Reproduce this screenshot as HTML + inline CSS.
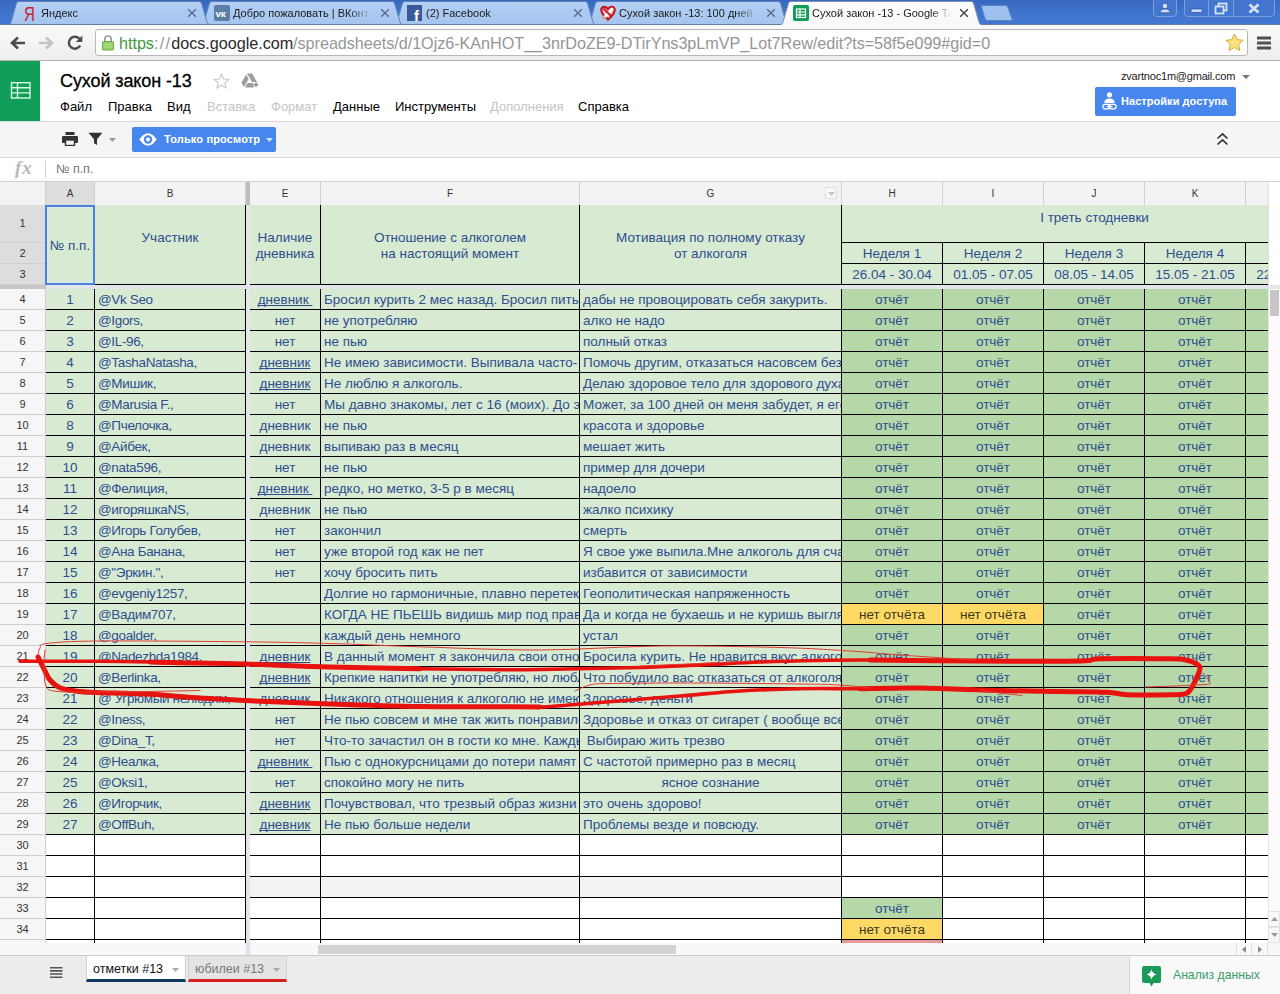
<!DOCTYPE html>
<html lang="ru">
<head>
<meta charset="utf-8">
<title>Сухой закон -13 - Google Таблицы</title>
<style>
*{box-sizing:border-box;margin:0;padding:0}
html,body{width:1280px;height:994px;overflow:hidden;background:#fff}
body{font-family:"Liberation Sans",sans-serif;position:relative;color:#000}
.abs{position:absolute}
/* ---------- browser chrome ---------- */
#frame{position:absolute;left:0;top:0;width:1280px;height:25px;background:linear-gradient(#3868bd,#4174cd 50%,#4378d2)}
.tab{position:absolute;top:1px;height:24px}
.tab svg{position:absolute;left:0;top:0}
.tab .tt{position:absolute;top:6px;left:40px;font-size:11px;color:#1a1a1a;white-space:nowrap;overflow:hidden}
.tab .x{position:absolute;top:4px;font-size:13px;color:#56627a;font-weight:bold}
#navbar{position:absolute;left:0;top:25px;width:1280px;height:36px;background:linear-gradient(#fafafa,#eeeeee);border-bottom:1px solid #b5b5b5}
#omni{position:absolute;left:95px;top:4px;width:1153px;height:27px;background:#fff;border:1px solid #b8b8b8;border-radius:3px}
#url{position:absolute;left:23px;top:4px;font-size:16.2px;letter-spacing:-0.04px;white-space:nowrap;color:#969696}
/* ---------- sheets header ---------- */
#logo{position:absolute;left:0;top:61px;width:40px;height:60px;background:#0f9d58}
#title{position:absolute;left:60px;top:71px;font-size:18px;color:#000;white-space:nowrap;letter-spacing:-0.1px;-webkit-text-stroke:0.3px #000}
#menu{position:absolute;left:60px;top:99px;font-size:13px;white-space:nowrap;color:#000}
#menu span{position:absolute;top:0}
#menu .dis{color:#c4c4c4}
#hdrline{position:absolute;left:0;top:121px;width:1280px;height:1px;background:#d9d9d9}
#toolbar{position:absolute;left:0;top:122px;width:1280px;height:36px;background:#f5f5f5;border-bottom:1px solid #d9d9d9}
#viewbtn{position:absolute;left:132px;top:4.5px;width:144px;height:25px;background:#4787ed;border-radius:2px;color:#fff;font-size:11px;font-weight:bold;letter-spacing:0.15px;line-height:25px}
#share{position:absolute;left:1095px;top:87px;width:141px;height:29px;background:#4787ed;border-radius:2px;color:#fff;font-size:11px;font-weight:bold;letter-spacing:0.05px;line-height:29px}
#email{position:absolute;left:1121px;top:70px;font-size:11px;letter-spacing:-0.2px;color:#222;white-space:nowrap}
#fbar{position:absolute;left:0;top:158px;width:1280px;height:24px;background:#fff;border-bottom:1px solid #d0d0d0}
/* ---------- grid ---------- */
#grid{position:absolute;left:0;top:182px;width:1268px;height:761px;background:#000;overflow:hidden}
#gridinner{position:absolute;left:0;top:-182px;width:1268px;height:1000px}
.ch{position:absolute;top:182px;height:23px;background:#f3f3f3;font-size:10px;text-align:center;line-height:24px;color:#333}
.ch.sel,.rh.sel{background:#dddddd}
.rh{position:absolute;left:0;width:45px;background:#f6f6f6;font-size:11px;text-align:center;color:#333}
.c{position:absolute;overflow:hidden;white-space:nowrap;font-size:13.5px;color:#2d4f8e;padding:0 3px;font-family:"Liberation Sans",sans-serif}
.lg{background:#d9ead3}
.dg{background:#b6d7a8}
.yl{background:#ffd966;color:#3a3a20}
.wh{background:#fff}
.gr{background:#f3f3f3}
.rd{background:#ea9999}
.ctr{text-align:center}
.cb{letter-spacing:-0.35px}
.c u{text-decoration:underline;text-decoration-skip-ink:none;text-underline-offset:1px}
.hd{position:absolute;background:#d9ead3;color:#2d4f8e;font-size:13.5px;text-align:center;white-space:nowrap;overflow:hidden}
/* ---------- bottom ---------- */
#hscroll{position:absolute;left:0;top:943px;width:1280px;height:12px;background:#f8f8f8}
#bottom{position:absolute;left:0;top:955px;width:1280px;height:39px;background:#ececec;border-top:1px solid #cbcbcb}
</style>
</head>
<body>
<!-- ================= Browser frame / tabs ================= -->
<div id="frame">
<svg width="0" height="0" style="position:absolute"><defs><linearGradient id="ti" x1="0" y1="0" x2="0" y2="1"><stop offset="0" stop-color="#b4d0f5"/><stop offset="1" stop-color="#a3c4ee"/></linearGradient><linearGradient id="ta" x1="0" y1="0" x2="0" y2="1"><stop offset="0" stop-color="#ffffff"/><stop offset="1" stop-color="#f7f7f7"/></linearGradient></defs></svg><div class="tab" style="left:587.0px;width:202px"><svg width="202" height="25" viewBox="0 0 202 25"><path d="M0 24 C1.5 24 2.5 22.5 3.2 20.5 L8.2 3 C8.8 1.2 9.6 0.5 11 0.5 L191 0.5 C192.4 0.5 193.2 1.2 193.8 3 L198.8 20.5 C199.5 22.5 200.5 24 202 24 Z" fill="url(#ti)"/><path d="M0 24 C1.5 24 2.5 22.5 3.2 20.5 L8.2 3 C8.8 1.2 9.6 0.5 11 0.5 L191 0.5 C192.4 0.5 193.2 1.2 193.8 3 L198.8 20.5 C199.5 22.5 200.5 24 202 24" fill="none" stroke="#5f82bd" stroke-width="1"/></svg><svg width="16" height="16" viewBox="0 0 16 16" style="left:13px;top:4px;overflow:visible"><path d="M8 14.500 C2.500 10 0.800 7 1.300 4.300 C2 1.300 6 1 8 4 C10 1 14 1.300 14.700 4.300 C15.200 7 13.500 10 8 14.500Z" fill="#eec0bd" stroke="#c7141d" stroke-width="2.200"/><path d="M12.800 3.200 L4.200 12.300" stroke="#fff" stroke-width="2.600" fill="none"/><path d="M3.600 3.600 L11.800 11.600" stroke="#c7141d" stroke-width="2" fill="none"/><path d="M4.600 11.800 L3 13.500" stroke="#e39a3a" stroke-width="2" fill="none"/></svg><span class="tt" style="left:32px;width:138px;-webkit-mask-image:linear-gradient(90deg,#000 85%,transparent);mask-image:linear-gradient(90deg,#000 85%,transparent)">Сухой закон -13: 100 дней</span><svg width="10" height="10" viewBox="0 0 10 10" style="left:179px;top:7px"><path d="M1.2 1.2L8.8 8.8M8.8 1.2L1.2 8.8" stroke="#5a6b8c" stroke-width="1.4" fill="none"/></svg></div><div class="tab" style="left:394.0px;width:202px"><svg width="202" height="25" viewBox="0 0 202 25"><path d="M0 24 C1.5 24 2.5 22.5 3.2 20.5 L8.2 3 C8.8 1.2 9.6 0.5 11 0.5 L191 0.5 C192.4 0.5 193.2 1.2 193.8 3 L198.8 20.5 C199.5 22.5 200.5 24 202 24 Z" fill="url(#ti)"/><path d="M0 24 C1.5 24 2.5 22.5 3.2 20.5 L8.2 3 C8.8 1.2 9.6 0.5 11 0.5 L191 0.5 C192.4 0.5 193.2 1.2 193.8 3 L198.8 20.5 C199.5 22.5 200.5 24 202 24" fill="none" stroke="#5f82bd" stroke-width="1"/></svg><svg width="16" height="16" viewBox="0 0 16 16" style="left:13px;top:4px;overflow:visible"><rect x="0" y="0" width="15" height="16" fill="#3b5998"/><text x="7" y="15.5" font-size="15" font-weight="bold" font-family="Liberation Sans, sans-serif" fill="#fff">f</text></svg><span class="tt" style="left:32px;width:138px;-webkit-mask-image:linear-gradient(90deg,#000 85%,transparent);mask-image:linear-gradient(90deg,#000 85%,transparent)">(2) Facebook</span><svg width="10" height="10" viewBox="0 0 10 10" style="left:179px;top:7px"><path d="M1.2 1.2L8.8 8.8M8.8 1.2L1.2 8.8" stroke="#5a6b8c" stroke-width="1.4" fill="none"/></svg></div><div class="tab" style="left:201.0px;width:202px"><svg width="202" height="25" viewBox="0 0 202 25"><path d="M0 24 C1.5 24 2.5 22.5 3.2 20.5 L8.2 3 C8.8 1.2 9.6 0.5 11 0.5 L191 0.5 C192.4 0.5 193.2 1.2 193.8 3 L198.8 20.5 C199.5 22.5 200.5 24 202 24 Z" fill="url(#ti)"/><path d="M0 24 C1.5 24 2.5 22.5 3.2 20.5 L8.2 3 C8.8 1.2 9.6 0.5 11 0.5 L191 0.5 C192.4 0.5 193.2 1.2 193.8 3 L198.8 20.5 C199.5 22.5 200.5 24 202 24" fill="none" stroke="#5f82bd" stroke-width="1"/></svg><svg width="16" height="16" viewBox="0 0 16 16" style="left:13px;top:4px;overflow:visible"><rect x="0" y="0" width="16" height="16" rx="2" fill="#5b7fa6"/><text x="1.5" y="11.800" font-size="9.800" font-weight="bold" font-family="Liberation Sans, sans-serif" fill="#fff" letter-spacing="-0.300">vк</text></svg><span class="tt" style="left:32px;width:138px;-webkit-mask-image:linear-gradient(90deg,#000 85%,transparent);mask-image:linear-gradient(90deg,#000 85%,transparent)">Добро пожаловать | ВКонт</span><svg width="10" height="10" viewBox="0 0 10 10" style="left:179px;top:7px"><path d="M1.2 1.2L8.8 8.8M8.8 1.2L1.2 8.8" stroke="#5a6b8c" stroke-width="1.4" fill="none"/></svg></div><div class="tab" style="left:8.0px;width:202px"><svg width="202" height="25" viewBox="0 0 202 25"><path d="M0 24 C1.5 24 2.5 22.5 3.2 20.5 L8.2 3 C8.8 1.2 9.6 0.5 11 0.5 L191 0.5 C192.4 0.5 193.2 1.2 193.8 3 L198.8 20.5 C199.5 22.5 200.5 24 202 24 Z" fill="url(#ti)"/><path d="M0 24 C1.5 24 2.5 22.5 3.2 20.5 L8.2 3 C8.8 1.2 9.6 0.5 11 0.5 L191 0.5 C192.4 0.5 193.2 1.2 193.8 3 L198.8 20.5 C199.5 22.5 200.5 24 202 24" fill="none" stroke="#5f82bd" stroke-width="1"/></svg><svg width="16" height="16" viewBox="0 0 16 16" style="left:16px;top:4px;overflow:visible"><text x="0" y="16" font-size="21" font-family="Liberation Sans, sans-serif" fill="#cc2229" transform="scale(0.72,1)">Я</text></svg><span class="tt" style="left:33px;width:138px;-webkit-mask-image:linear-gradient(90deg,#000 85%,transparent);mask-image:linear-gradient(90deg,#000 85%,transparent)">Яндекс</span><svg width="10" height="10" viewBox="0 0 10 10" style="left:179px;top:7px"><path d="M1.2 1.2L8.8 8.8M8.8 1.2L1.2 8.8" stroke="#5a6b8c" stroke-width="1.4" fill="none"/></svg></div><div class="abs" style="left:0;top:24px;width:1280px;height:1px;background:#637ba6"></div><div class="tab" style="left:780.0px;width:202px"><svg width="202" height="25" viewBox="0 0 202 25"><path d="M0 24 C1.5 24 2.5 22.5 3.2 20.5 L8.2 3 C8.8 1.2 9.6 0.5 11 0.5 L191 0.5 C192.4 0.5 193.2 1.2 193.8 3 L198.8 20.5 C199.5 22.5 200.5 24 202 24 Z" fill="url(#ta)"/><path d="M0 24 C1.5 24 2.5 22.5 3.2 20.5 L8.2 3 C8.8 1.2 9.6 0.5 11 0.5 L191 0.5 C192.4 0.5 193.2 1.2 193.8 3 L198.8 20.5 C199.5 22.5 200.5 24 202 24" fill="none" stroke="#7d8fae" stroke-width="1"/></svg><svg width="16" height="16" viewBox="0 0 16 16" style="left:13px;top:4px;overflow:visible"><rect x="0" y="0" width="16" height="16" rx="2" fill="#0f9d58"/><g fill="none" stroke="#fff" stroke-width="1.2"><rect x="3.5" y="4" width="9" height="8.5"/><path d="M3.5 7h9M3.5 9.8h9M7 4v8.5"/></g></svg><span class="tt" style="left:32px;width:140px;-webkit-mask-image:linear-gradient(90deg,#000 85%,transparent);mask-image:linear-gradient(90deg,#000 85%,transparent)">Сухой закон -13 - Google Та</span><svg width="10" height="10" viewBox="0 0 10 10" style="left:179px;top:7px"><path d="M1.2 1.2L8.8 8.8M8.8 1.2L1.2 8.8" stroke="#444" stroke-width="1.4" fill="none"/></svg></div><svg class="abs" style="left:979px;top:5px" width="36" height="16" viewBox="0 0 36 16"><path d="M2 0.5 L26 0.5 C28 0.5 28.6 1.5 29.2 3 L33.5 15.5 L9 15.5 C7 15.5 6.4 14.5 5.8 13 Z" fill="#9dc0ee" stroke="#5f82bd" stroke-width="1"/></svg><svg class="abs" style="left:1150px;top:0" width="130" height="19" viewBox="0 0 130 19"><path d="M3.500 0 V13 Q3.500 16.500 7 16.500 H23 Q26.500 16.500 26.500 13 V0" fill="#4376cf" stroke="#7c9fdc"/><path d="M34.500 0 V13 Q34.500 16.500 38 16.500 H121 Q124.500 16.500 124.500 13 V0" fill="#4376cf" stroke="#7c9fdc"/><path d="M58.500 0V16.500M83.500 0V16.500" stroke="#7c9fdc"/><circle cx="15" cy="6" r="2.800" fill="#d4e2fb" stroke="#2f55a0" stroke-width="0.800"/><path d="M10 12.800 Q10 9 15 9 Q20 9 20 12.800Z" fill="#d4e2fb" stroke="#2f55a0" stroke-width="0.800"/><rect x="41" y="9" width="11" height="3.400" rx="1" fill="#d4e2fb" stroke="#2f55a0" stroke-width="0.800"/><rect x="68.500" y="3.500" width="8" height="7" fill="none" stroke="#d4e2fb" stroke-width="1.800"/><rect x="65.500" y="6.500" width="8" height="7" fill="#4376cf" stroke="#d4e2fb" stroke-width="1.800"/><path d="M99.500 4.500 L108.500 12.500 M108.500 4.500 L99.500 12.500" stroke="#d4e2fb" stroke-width="2.800"/></svg>
</div>
<div id="navbar">
<svg class="abs" style="left:9px;top:10px" width="18" height="16" viewBox="0 0 18 16"><path d="M16 8H4M9 2.500L3 8l6 5.500" fill="none" stroke="#4d4d4d" stroke-width="2.600"/></svg><svg class="abs" style="left:37px;top:10px" width="18" height="16" viewBox="0 0 18 16"><path d="M2 8h12M9 2.500L15 8l-6 5.500" fill="none" stroke="#c3c3c3" stroke-width="2.600"/></svg><svg class="abs" style="left:66px;top:9px" width="18" height="18" viewBox="0 0 18 18"><path d="M14.200 11.500A6 6 0 1 1 13.600 5" fill="none" stroke="#4d4d4d" stroke-width="2.500"/><path d="M16.300 1.500v6.500h-6.500z" fill="#4d4d4d"/></svg><div id="omni"><svg class="abs" style="left:6px;top:4px" width="12" height="17" viewBox="0 0 12 17"><path d="M2.800 8V5.200a3.200 3.200 0 0 1 6.400 0V8" fill="none" stroke="#9a9a9a" stroke-width="1.600"/><rect x="0.500" y="7.500" width="11" height="8.500" rx="1" fill="#93cf63" stroke="#6aa843"/><path d="M1.500 10.300h9M1.500 12.800h9" stroke="#b6e394" stroke-width="1"/></svg><div id="url"><span style="color:#3c9a3c">https</span><span style="letter-spacing:1.3px">://</span><span style="color:#2a2a2a">docs.google.com</span>/spreadsheets/d/1Ojz6-KAnHOT__3nrDoZE9-DTirYns3pLmVP_Lot7Rew/edit?ts=58f5e099#gid=0</div><svg class="abs" style="left:1129px;top:3px" width="19" height="19" viewBox="0 0 19 19"><path d="M9.500 1l2.600 5.600 6 .700-4.500 4.200 1.200 6-5.300-3-5.300 3 1.200-6L.900 7.300l6-.700z" fill="#fbe27f" stroke="#d4ab35" stroke-width="1"/></svg></div><svg class="abs" style="left:1257px;top:11px" width="14" height="14" viewBox="0 0 14 14"><path d="M0 2h13.500M0 7h13.500M0 12h13.500" stroke="#505050" stroke-width="3" stroke-linecap="round"/></svg>
</div>

<!-- ================= Sheets header ================= -->
<div id="logo">
<svg width="40" height="60" viewBox="0 0 40 60"><g fill="none" stroke="#d9f8e5" stroke-width="1.400"><rect x="11.500" y="21.700" width="18.500" height="15.300"/><path d="M11.500 26.800h18.500M11.500 31.900h18.500M17.500 21.700v15.300"/></g></svg>
</div>
<div id="title">Сухой закон -13</div>
<svg class="abs" style="left:213px;top:73px" width="17" height="16" viewBox="0 0 17 16"><path d="M8.500 1.300l2.100 4.700 5.100.500-3.800 3.400 1.100 5-4.500-2.600-4.500 2.600 1.100-5L1.300 6.500l5.100-.500z" fill="none" stroke="#c9c9c9" stroke-width="1.200"/></svg><svg class="abs" style="left:241px;top:73px" width="19" height="15" viewBox="0 0 19 15"><path d="M6 0.500h5l5 8.500h-5zM5.200 1.500L0.500 9.500l2.500 4.500 4.700-8zM4 14.500l2.500-4.500h6.500v4.500z" fill="#9e9e9e"/><path d="M15 9v5.500M12.300 11.800h5.500" stroke="#fff" stroke-width="3"/><path d="M15 9.500v4.600M12.700 11.800h4.600" stroke="#8a8a8a" stroke-width="1.500"/></svg><svg class="abs" style="left:1242px;top:75px" width="8" height="4" viewBox="0 0 8 4"><path d="M0 0h8L4 4z" fill="#777"/></svg>
<div id="menu">
<span style="left:0">Файл</span><span style="left:48px">Правка</span><span style="left:107px">Вид</span><span class="dis" style="left:147px">Вставка</span><span class="dis" style="left:211px">Формат</span><span style="left:273px">Данные</span><span style="left:335px">Инструменты</span><span class="dis" style="left:430px">Дополнения</span><span style="left:518px">Справка</span>
</div>
<div id="email">zvartnoc1m@gmail.com</div>
<div id="share"><svg class="abs" style="left:7px;top:5px" width="15" height="18" viewBox="0 0 15 18"><circle cx="7.500" cy="2.800" r="2.600" fill="#fff"/><path d="M2.300 11Q2.300 6.500 7.500 6.500Q12.700 6.500 12.700 11Z" fill="#fff"/><rect x="0.800" y="12.300" width="7.600" height="4.600" rx="2.300" fill="#4787ed" stroke="#fff" stroke-width="1.200"/><rect x="6.600" y="12.300" width="7.600" height="4.600" rx="2.300" fill="none" stroke="#fff" stroke-width="1.200"/><path d="M4.500 14.600h6" stroke="#fff" stroke-width="1.200"/></svg><span style="position:absolute;left:26px;top:0">Настройки доступа</span></div>
<div id="hdrline"></div>
<div id="toolbar">
<svg class="abs" style="left:62px;top:10px" width="16" height="14" viewBox="0 0 16 14"><rect x="3.500" y="0" width="9" height="3" fill="#333"/><rect x="0" y="4" width="16" height="7" rx="1" fill="#333"/><rect x="3.500" y="8" width="9" height="5.500" fill="#f5f5f5" stroke="#333" stroke-width="1.400"/></svg><svg class="abs" style="left:88px;top:10px" width="15" height="14" viewBox="0 0 15 14"><path d="M0.500 0.800h14L9 7.300V13L6 11.300V7.300z" fill="#333"/></svg><svg class="abs" style="left:109px;top:16px" width="7" height="4" viewBox="0 0 7 4"><path d="M0 0h7L3.500 4z" fill="#9a9a9a"/></svg><div id="viewbtn"><svg class="abs" style="left:7px;top:4px" width="18" height="17" viewBox="0 0 18 17"><path d="M0.300 8.500Q9 -4 17.700 8.500Q9 21 0.300 8.500Z" fill="#fff"/><circle cx="9" cy="8.500" r="4.200" fill="#4787ed"/><circle cx="9" cy="8.500" r="2" fill="#fff"/></svg><span style="position:absolute;left:32px;top:0">Только просмотр</span><svg class="abs" style="left:134px;top:11px" width="7" height="4" viewBox="0 0 7 4"><path d="M0 0h7L3.500 4z" fill="#cfe0fb"/></svg></div><svg class="abs" style="left:1216px;top:10px" width="13" height="14" viewBox="0 0 13 14"><path d="M1.500 6.500L6.500 1.800L11.500 6.500M1.500 12.500L6.500 7.800L11.500 12.500" fill="none" stroke="#333" stroke-width="1.700"/></svg>
</div>
<div id="fbar">
<span style="position:absolute;left:15px;top:-1px;font-family:'Liberation Serif',serif;font-style:italic;font-weight:bold;font-size:19px;letter-spacing:1px;color:#b8b8b8">fx</span>
<div style="position:absolute;left:45px;top:3px;width:1px;height:17px;background:#d0d0d0"></div>
<span style="position:absolute;left:56px;top:4px;font-size:12.5px;color:#777">№ п.п.</span>
</div>

<!-- ================= Grid ================= -->
<div id="grid"><div id="gridinner">
<div class="abs" style="left:0;top:182px;width:1268px;height:23px;background:#cfcfcf"></div>
<div class="abs" style="left:0;top:182px;width:45px;height:23px;background:#f3f3f3"></div>
<div class="ch sel" style="left:46px;width:48px">A</div>
<div class="ch" style="left:95px;width:150px">B</div>
<div class="ch" style="left:250px;width:70px">E</div>
<div class="ch" style="left:321px;width:258px">F</div>
<div class="ch" style="left:580px;width:261px">G</div>
<div class="ch" style="left:842px;width:100px">H</div>
<div class="ch" style="left:943px;width:100px">I</div>
<div class="ch" style="left:1044px;width:100px">J</div>
<div class="ch" style="left:1145px;width:100px">K</div>
<div class="ch" style="left:1246px;width:22px"></div>
<div class="abs" style="left:0;top:205px;width:46px;height:760px;background:#cfcfcf"></div>
<div class="rh sel" style="top:205px;height:37px;line-height:37px">1</div>
<div class="rh sel" style="top:243px;height:20px;line-height:20px">2</div>
<div class="rh sel" style="top:264px;height:20px;line-height:20px">3</div>
<div class="rh" style="top:289px;height:20px;line-height:20px">4</div>
<div class="rh" style="top:310px;height:20px;line-height:20px">5</div>
<div class="rh" style="top:331px;height:20px;line-height:20px">6</div>
<div class="rh" style="top:352px;height:20px;line-height:20px">7</div>
<div class="rh" style="top:373px;height:20px;line-height:20px">8</div>
<div class="rh" style="top:394px;height:20px;line-height:20px">9</div>
<div class="rh" style="top:415px;height:20px;line-height:20px">10</div>
<div class="rh" style="top:436px;height:20px;line-height:20px">11</div>
<div class="rh" style="top:457px;height:20px;line-height:20px">12</div>
<div class="rh" style="top:478px;height:20px;line-height:20px">13</div>
<div class="rh" style="top:499px;height:20px;line-height:20px">14</div>
<div class="rh" style="top:520px;height:20px;line-height:20px">15</div>
<div class="rh" style="top:541px;height:20px;line-height:20px">16</div>
<div class="rh" style="top:562px;height:20px;line-height:20px">17</div>
<div class="rh" style="top:583px;height:20px;line-height:20px">18</div>
<div class="rh" style="top:604px;height:20px;line-height:20px">19</div>
<div class="rh" style="top:625px;height:20px;line-height:20px">20</div>
<div class="rh" style="top:646px;height:20px;line-height:20px">21</div>
<div class="rh" style="top:667px;height:20px;line-height:20px">22</div>
<div class="rh" style="top:688px;height:20px;line-height:20px">23</div>
<div class="rh" style="top:709px;height:20px;line-height:20px">24</div>
<div class="rh" style="top:730px;height:20px;line-height:20px">25</div>
<div class="rh" style="top:751px;height:20px;line-height:20px">26</div>
<div class="rh" style="top:772px;height:20px;line-height:20px">27</div>
<div class="rh" style="top:793px;height:20px;line-height:20px">28</div>
<div class="rh" style="top:814px;height:20px;line-height:20px">29</div>
<div class="rh" style="top:835px;height:20px;line-height:20px">30</div>
<div class="rh" style="top:856px;height:20px;line-height:20px">31</div>
<div class="rh" style="top:877px;height:20px;line-height:20px">32</div>
<div class="rh" style="top:898px;height:20px;line-height:20px">33</div>
<div class="rh" style="top:919px;height:20px;line-height:20px">34</div>
<div class="rh" style="top:940px;height:20px;line-height:20px">35</div>
<div class="hd" style="left:46px;top:205px;width:48px;height:79px;display:flex;align-items:center;justify-content:center;line-height:16px;padding-top:2px;"><span>№ п.п.</span></div><div class="hd" style="left:95px;top:205px;width:150px;height:79px;display:flex;align-items:center;justify-content:center;line-height:16px;padding-top:2px;"><span>Участник<br>&nbsp;</span></div><div class="hd" style="left:250px;top:205px;width:70px;height:79px;display:flex;align-items:center;justify-content:center;line-height:16px;padding-top:2px;"><span>Наличие<br>дневника</span></div><div class="hd" style="left:321px;top:205px;width:258px;height:79px;display:flex;align-items:center;justify-content:center;line-height:16px;padding-top:2px;"><span>Отношение с алкоголем<br>на настоящий момент</span></div><div class="hd" style="left:580px;top:205px;width:261px;height:79px;display:flex;align-items:center;justify-content:center;line-height:16px;padding-top:2px;"><span>Мотивация по полному отказу<br>от алкоголя</span></div><div class="hd" style="left:842px;top:205px;width:505px;height:37px;line-height:37px;"><span style="position:relative;top:-6px">I треть стодневки</span></div><div class="hd" style="left:842px;top:243px;width:100px;height:20px;line-height:22px;">Неделя 1</div><div class="hd" style="left:943px;top:243px;width:100px;height:20px;line-height:22px;">Неделя 2</div><div class="hd" style="left:1044px;top:243px;width:100px;height:20px;line-height:22px;">Неделя 3</div><div class="hd" style="left:1145px;top:243px;width:100px;height:20px;line-height:22px;">Неделя 4</div><div class="hd" style="left:1246px;top:243px;width:100px;height:20px;line-height:20px;"></div><div class="hd" style="left:842px;top:264px;width:100px;height:20px;line-height:22px;">26.04 - 30.04</div><div class="hd" style="left:943px;top:264px;width:100px;height:20px;line-height:22px;">01.05 - 07.05</div><div class="hd" style="left:1044px;top:264px;width:100px;height:20px;line-height:22px;">08.05 - 14.05</div><div class="hd" style="left:1145px;top:264px;width:100px;height:20px;line-height:22px;">15.05 - 21.05</div><div class="hd" style="left:1246px;top:264px;width:100px;height:20px;line-height:22px;">22.05 - 28.05</div><div class="abs" style="left:45px;top:205px;width:50px;height:80px;border:2px solid #4a82d8;box-shadow:inset 0 0 0 1px rgba(215,232,255,.75)"></div><div class="abs" style="left:825px;top:187px;width:12px;height:12px;border:1px solid #e0e0e0;background:#f8f8f8"></div><svg class="abs" style="left:828px;top:192px" width="7" height="4" viewBox="0 0 7 4"><path d="M0 0h7L3.500 4z" fill="#c4c4c4"/></svg>
<div class="c lg ctr" style="left:46px;top:289px;width:48px;height:20px;line-height:22px;">1</div>
<div class="c lg cb" style="left:95px;top:289px;width:150px;height:20px;line-height:22px;">@Vk Seo</div>
<div class="c lg ctr" style="left:250px;top:289px;width:70px;height:20px;line-height:22px;"><u>дневник&nbsp;</u></div>
<div class="c lg" style="left:321px;top:289px;width:258px;height:20px;line-height:22px;">Бросил курить 2 мес назад. Бросил пить</div>
<div class="c lg" style="left:580px;top:289px;width:261px;height:20px;line-height:22px;">дабы не провоцировать себя закурить.</div>
<div class="c dg ctr" style="left:842px;top:289px;width:100px;height:20px;line-height:22px;">отчёт</div>
<div class="c dg ctr" style="left:943px;top:289px;width:100px;height:20px;line-height:22px;">отчёт</div>
<div class="c dg ctr" style="left:1044px;top:289px;width:100px;height:20px;line-height:22px;">отчёт</div>
<div class="c dg ctr" style="left:1145px;top:289px;width:100px;height:20px;line-height:22px;">отчёт</div>
<div class="c dg" style="left:1246px;top:289px;width:22px;height:20px;line-height:22px;"></div>
<div class="c lg ctr" style="left:46px;top:310px;width:48px;height:20px;line-height:22px;">2</div>
<div class="c lg cb" style="left:95px;top:310px;width:150px;height:20px;line-height:22px;">@Igors,</div>
<div class="c lg ctr" style="left:250px;top:310px;width:70px;height:20px;line-height:22px;">нет</div>
<div class="c lg" style="left:321px;top:310px;width:258px;height:20px;line-height:22px;">не употребляю</div>
<div class="c lg" style="left:580px;top:310px;width:261px;height:20px;line-height:22px;">алко не надо</div>
<div class="c dg ctr" style="left:842px;top:310px;width:100px;height:20px;line-height:22px;">отчёт</div>
<div class="c dg ctr" style="left:943px;top:310px;width:100px;height:20px;line-height:22px;">отчёт</div>
<div class="c dg ctr" style="left:1044px;top:310px;width:100px;height:20px;line-height:22px;">отчёт</div>
<div class="c dg ctr" style="left:1145px;top:310px;width:100px;height:20px;line-height:22px;">отчёт</div>
<div class="c dg" style="left:1246px;top:310px;width:22px;height:20px;line-height:22px;"></div>
<div class="c lg ctr" style="left:46px;top:331px;width:48px;height:20px;line-height:22px;">3</div>
<div class="c lg cb" style="left:95px;top:331px;width:150px;height:20px;line-height:22px;">@IL-96,</div>
<div class="c lg ctr" style="left:250px;top:331px;width:70px;height:20px;line-height:22px;">нет</div>
<div class="c lg" style="left:321px;top:331px;width:258px;height:20px;line-height:22px;">не пью</div>
<div class="c lg" style="left:580px;top:331px;width:261px;height:20px;line-height:22px;">полный отказ</div>
<div class="c dg ctr" style="left:842px;top:331px;width:100px;height:20px;line-height:22px;">отчёт</div>
<div class="c dg ctr" style="left:943px;top:331px;width:100px;height:20px;line-height:22px;">отчёт</div>
<div class="c dg ctr" style="left:1044px;top:331px;width:100px;height:20px;line-height:22px;">отчёт</div>
<div class="c dg ctr" style="left:1145px;top:331px;width:100px;height:20px;line-height:22px;">отчёт</div>
<div class="c dg" style="left:1246px;top:331px;width:22px;height:20px;line-height:22px;"></div>
<div class="c lg ctr" style="left:46px;top:352px;width:48px;height:20px;line-height:22px;">4</div>
<div class="c lg cb" style="left:95px;top:352px;width:150px;height:20px;line-height:22px;">@TashaNatasha,</div>
<div class="c lg ctr" style="left:250px;top:352px;width:70px;height:20px;line-height:22px;"><u>дневник</u></div>
<div class="c lg" style="left:321px;top:352px;width:258px;height:20px;line-height:22px;">Не имею зависимости. Выпивала часто-</div>
<div class="c lg" style="left:580px;top:352px;width:261px;height:20px;line-height:22px;">Помочь другим, отказаться насовсем без</div>
<div class="c dg ctr" style="left:842px;top:352px;width:100px;height:20px;line-height:22px;">отчёт</div>
<div class="c dg ctr" style="left:943px;top:352px;width:100px;height:20px;line-height:22px;">отчёт</div>
<div class="c dg ctr" style="left:1044px;top:352px;width:100px;height:20px;line-height:22px;">отчёт</div>
<div class="c dg ctr" style="left:1145px;top:352px;width:100px;height:20px;line-height:22px;">отчёт</div>
<div class="c dg" style="left:1246px;top:352px;width:22px;height:20px;line-height:22px;"></div>
<div class="c lg ctr" style="left:46px;top:373px;width:48px;height:20px;line-height:22px;">5</div>
<div class="c lg cb" style="left:95px;top:373px;width:150px;height:20px;line-height:22px;">@Мишик,</div>
<div class="c lg ctr" style="left:250px;top:373px;width:70px;height:20px;line-height:22px;"><u>дневник</u></div>
<div class="c lg" style="left:321px;top:373px;width:258px;height:20px;line-height:22px;">Не люблю я алкоголь.</div>
<div class="c lg" style="left:580px;top:373px;width:261px;height:20px;line-height:22px;">Делаю здоровое тело для здорового духа</div>
<div class="c dg ctr" style="left:842px;top:373px;width:100px;height:20px;line-height:22px;">отчёт</div>
<div class="c dg ctr" style="left:943px;top:373px;width:100px;height:20px;line-height:22px;">отчёт</div>
<div class="c dg ctr" style="left:1044px;top:373px;width:100px;height:20px;line-height:22px;">отчёт</div>
<div class="c dg ctr" style="left:1145px;top:373px;width:100px;height:20px;line-height:22px;">отчёт</div>
<div class="c dg" style="left:1246px;top:373px;width:22px;height:20px;line-height:22px;"></div>
<div class="c lg ctr" style="left:46px;top:394px;width:48px;height:20px;line-height:22px;">6</div>
<div class="c lg cb" style="left:95px;top:394px;width:150px;height:20px;line-height:22px;">@Marusia F.,</div>
<div class="c lg ctr" style="left:250px;top:394px;width:70px;height:20px;line-height:22px;">нет</div>
<div class="c lg" style="left:321px;top:394px;width:258px;height:20px;line-height:22px;">Мы давно знакомы, лет с 16 (моих). До э</div>
<div class="c lg" style="left:580px;top:394px;width:261px;height:20px;line-height:22px;">Может, за 100 дней он меня забудет, я его</div>
<div class="c dg ctr" style="left:842px;top:394px;width:100px;height:20px;line-height:22px;">отчёт</div>
<div class="c dg ctr" style="left:943px;top:394px;width:100px;height:20px;line-height:22px;">отчёт</div>
<div class="c dg ctr" style="left:1044px;top:394px;width:100px;height:20px;line-height:22px;">отчёт</div>
<div class="c dg ctr" style="left:1145px;top:394px;width:100px;height:20px;line-height:22px;">отчёт</div>
<div class="c dg" style="left:1246px;top:394px;width:22px;height:20px;line-height:22px;"></div>
<div class="c lg ctr" style="left:46px;top:415px;width:48px;height:20px;line-height:22px;">8</div>
<div class="c lg cb" style="left:95px;top:415px;width:150px;height:20px;line-height:22px;">@Пчелочка,</div>
<div class="c lg ctr" style="left:250px;top:415px;width:70px;height:20px;line-height:22px;">дневник</div>
<div class="c lg" style="left:321px;top:415px;width:258px;height:20px;line-height:22px;">не пью</div>
<div class="c lg" style="left:580px;top:415px;width:261px;height:20px;line-height:22px;">красота и здоровье</div>
<div class="c dg ctr" style="left:842px;top:415px;width:100px;height:20px;line-height:22px;">отчёт</div>
<div class="c dg ctr" style="left:943px;top:415px;width:100px;height:20px;line-height:22px;">отчёт</div>
<div class="c dg ctr" style="left:1044px;top:415px;width:100px;height:20px;line-height:22px;">отчёт</div>
<div class="c dg ctr" style="left:1145px;top:415px;width:100px;height:20px;line-height:22px;">отчёт</div>
<div class="c dg" style="left:1246px;top:415px;width:22px;height:20px;line-height:22px;"></div>
<div class="c lg ctr" style="left:46px;top:436px;width:48px;height:20px;line-height:22px;">9</div>
<div class="c lg cb" style="left:95px;top:436px;width:150px;height:20px;line-height:22px;">@Айбек,</div>
<div class="c lg ctr" style="left:250px;top:436px;width:70px;height:20px;line-height:22px;">дневник</div>
<div class="c lg" style="left:321px;top:436px;width:258px;height:20px;line-height:22px;">выпиваю раз в месяц</div>
<div class="c lg" style="left:580px;top:436px;width:261px;height:20px;line-height:22px;">мешает жить</div>
<div class="c dg ctr" style="left:842px;top:436px;width:100px;height:20px;line-height:22px;">отчёт</div>
<div class="c dg ctr" style="left:943px;top:436px;width:100px;height:20px;line-height:22px;">отчёт</div>
<div class="c dg ctr" style="left:1044px;top:436px;width:100px;height:20px;line-height:22px;">отчёт</div>
<div class="c dg ctr" style="left:1145px;top:436px;width:100px;height:20px;line-height:22px;">отчёт</div>
<div class="c dg" style="left:1246px;top:436px;width:22px;height:20px;line-height:22px;"></div>
<div class="c lg ctr" style="left:46px;top:457px;width:48px;height:20px;line-height:22px;">10</div>
<div class="c lg cb" style="left:95px;top:457px;width:150px;height:20px;line-height:22px;">@nata596,</div>
<div class="c lg ctr" style="left:250px;top:457px;width:70px;height:20px;line-height:22px;">нет</div>
<div class="c lg" style="left:321px;top:457px;width:258px;height:20px;line-height:22px;">не пью</div>
<div class="c lg" style="left:580px;top:457px;width:261px;height:20px;line-height:22px;">пример для дочери</div>
<div class="c dg ctr" style="left:842px;top:457px;width:100px;height:20px;line-height:22px;">отчёт</div>
<div class="c dg ctr" style="left:943px;top:457px;width:100px;height:20px;line-height:22px;">отчёт</div>
<div class="c dg ctr" style="left:1044px;top:457px;width:100px;height:20px;line-height:22px;">отчёт</div>
<div class="c dg ctr" style="left:1145px;top:457px;width:100px;height:20px;line-height:22px;">отчёт</div>
<div class="c dg" style="left:1246px;top:457px;width:22px;height:20px;line-height:22px;"></div>
<div class="c lg ctr" style="left:46px;top:478px;width:48px;height:20px;line-height:22px;">11</div>
<div class="c lg cb" style="left:95px;top:478px;width:150px;height:20px;line-height:22px;">@Фелиция,</div>
<div class="c lg ctr" style="left:250px;top:478px;width:70px;height:20px;line-height:22px;"><u>дневник&nbsp;</u></div>
<div class="c lg" style="left:321px;top:478px;width:258px;height:20px;line-height:22px;">редко, но метко, 3-5 р в месяц</div>
<div class="c lg" style="left:580px;top:478px;width:261px;height:20px;line-height:22px;">надоело</div>
<div class="c dg ctr" style="left:842px;top:478px;width:100px;height:20px;line-height:22px;">отчёт</div>
<div class="c dg ctr" style="left:943px;top:478px;width:100px;height:20px;line-height:22px;">отчёт</div>
<div class="c dg ctr" style="left:1044px;top:478px;width:100px;height:20px;line-height:22px;">отчёт</div>
<div class="c dg ctr" style="left:1145px;top:478px;width:100px;height:20px;line-height:22px;">отчёт</div>
<div class="c dg" style="left:1246px;top:478px;width:22px;height:20px;line-height:22px;"></div>
<div class="c lg ctr" style="left:46px;top:499px;width:48px;height:20px;line-height:22px;">12</div>
<div class="c lg cb" style="left:95px;top:499px;width:150px;height:20px;line-height:22px;">@игоряшкаNS,</div>
<div class="c lg ctr" style="left:250px;top:499px;width:70px;height:20px;line-height:22px;">дневник</div>
<div class="c lg" style="left:321px;top:499px;width:258px;height:20px;line-height:22px;">не пью</div>
<div class="c lg" style="left:580px;top:499px;width:261px;height:20px;line-height:22px;">жалко психику</div>
<div class="c dg ctr" style="left:842px;top:499px;width:100px;height:20px;line-height:22px;">отчёт</div>
<div class="c dg ctr" style="left:943px;top:499px;width:100px;height:20px;line-height:22px;">отчёт</div>
<div class="c dg ctr" style="left:1044px;top:499px;width:100px;height:20px;line-height:22px;">отчёт</div>
<div class="c dg ctr" style="left:1145px;top:499px;width:100px;height:20px;line-height:22px;">отчёт</div>
<div class="c dg" style="left:1246px;top:499px;width:22px;height:20px;line-height:22px;"></div>
<div class="c lg ctr" style="left:46px;top:520px;width:48px;height:20px;line-height:22px;">13</div>
<div class="c lg cb" style="left:95px;top:520px;width:150px;height:20px;line-height:22px;">@Игорь Голубев,</div>
<div class="c lg ctr" style="left:250px;top:520px;width:70px;height:20px;line-height:22px;">нет</div>
<div class="c lg" style="left:321px;top:520px;width:258px;height:20px;line-height:22px;">закончил</div>
<div class="c lg" style="left:580px;top:520px;width:261px;height:20px;line-height:22px;">смерть</div>
<div class="c dg ctr" style="left:842px;top:520px;width:100px;height:20px;line-height:22px;">отчёт</div>
<div class="c dg ctr" style="left:943px;top:520px;width:100px;height:20px;line-height:22px;">отчёт</div>
<div class="c dg ctr" style="left:1044px;top:520px;width:100px;height:20px;line-height:22px;">отчёт</div>
<div class="c dg ctr" style="left:1145px;top:520px;width:100px;height:20px;line-height:22px;">отчёт</div>
<div class="c dg" style="left:1246px;top:520px;width:22px;height:20px;line-height:22px;"></div>
<div class="c lg ctr" style="left:46px;top:541px;width:48px;height:20px;line-height:22px;">14</div>
<div class="c lg cb" style="left:95px;top:541px;width:150px;height:20px;line-height:22px;">@Ана Банана,</div>
<div class="c lg ctr" style="left:250px;top:541px;width:70px;height:20px;line-height:22px;">нет</div>
<div class="c lg" style="left:321px;top:541px;width:258px;height:20px;line-height:22px;">уже второй год как не пет</div>
<div class="c lg" style="left:580px;top:541px;width:261px;height:20px;line-height:22px;">Я свое уже выпила.Мне алкоголь для счас</div>
<div class="c dg ctr" style="left:842px;top:541px;width:100px;height:20px;line-height:22px;">отчёт</div>
<div class="c dg ctr" style="left:943px;top:541px;width:100px;height:20px;line-height:22px;">отчёт</div>
<div class="c dg ctr" style="left:1044px;top:541px;width:100px;height:20px;line-height:22px;">отчёт</div>
<div class="c dg ctr" style="left:1145px;top:541px;width:100px;height:20px;line-height:22px;">отчёт</div>
<div class="c dg" style="left:1246px;top:541px;width:22px;height:20px;line-height:22px;"></div>
<div class="c lg ctr" style="left:46px;top:562px;width:48px;height:20px;line-height:22px;">15</div>
<div class="c lg cb" style="left:95px;top:562px;width:150px;height:20px;line-height:22px;">@"Эркин.",</div>
<div class="c lg ctr" style="left:250px;top:562px;width:70px;height:20px;line-height:22px;">нет</div>
<div class="c lg" style="left:321px;top:562px;width:258px;height:20px;line-height:22px;">хочу бросить пить</div>
<div class="c lg" style="left:580px;top:562px;width:261px;height:20px;line-height:22px;">избавится от зависимости</div>
<div class="c dg ctr" style="left:842px;top:562px;width:100px;height:20px;line-height:22px;">отчёт</div>
<div class="c dg ctr" style="left:943px;top:562px;width:100px;height:20px;line-height:22px;">отчёт</div>
<div class="c dg ctr" style="left:1044px;top:562px;width:100px;height:20px;line-height:22px;">отчёт</div>
<div class="c dg ctr" style="left:1145px;top:562px;width:100px;height:20px;line-height:22px;">отчёт</div>
<div class="c dg" style="left:1246px;top:562px;width:22px;height:20px;line-height:22px;"></div>
<div class="c lg ctr" style="left:46px;top:583px;width:48px;height:20px;line-height:22px;">16</div>
<div class="c lg cb" style="left:95px;top:583px;width:150px;height:20px;line-height:22px;">@evgeniy1257,</div>
<div class="c lg ctr" style="left:250px;top:583px;width:70px;height:20px;line-height:22px;"></div>
<div class="c lg" style="left:321px;top:583px;width:258px;height:20px;line-height:22px;">Долгие но гармоничные, плавно перетек</div>
<div class="c lg" style="left:580px;top:583px;width:261px;height:20px;line-height:22px;">Геополитическая напряженность</div>
<div class="c dg ctr" style="left:842px;top:583px;width:100px;height:20px;line-height:22px;">отчёт</div>
<div class="c dg ctr" style="left:943px;top:583px;width:100px;height:20px;line-height:22px;">отчёт</div>
<div class="c dg ctr" style="left:1044px;top:583px;width:100px;height:20px;line-height:22px;">отчёт</div>
<div class="c dg ctr" style="left:1145px;top:583px;width:100px;height:20px;line-height:22px;">отчёт</div>
<div class="c dg" style="left:1246px;top:583px;width:22px;height:20px;line-height:22px;"></div>
<div class="c lg ctr" style="left:46px;top:604px;width:48px;height:20px;line-height:22px;">17</div>
<div class="c lg cb" style="left:95px;top:604px;width:150px;height:20px;line-height:22px;">@Вадим707,</div>
<div class="c lg ctr" style="left:250px;top:604px;width:70px;height:20px;line-height:22px;"></div>
<div class="c lg" style="left:321px;top:604px;width:258px;height:20px;line-height:22px;">КОГДА НЕ ПЬЕШЬ видишь мир под прав</div>
<div class="c lg" style="left:580px;top:604px;width:261px;height:20px;line-height:22px;">Да и когда не бухаешь и не куришь выгляд</div>
<div class="c yl ctr" style="left:842px;top:604px;width:100px;height:20px;line-height:22px;">нет отчёта</div>
<div class="c yl ctr" style="left:943px;top:604px;width:100px;height:20px;line-height:22px;">нет отчёта</div>
<div class="c dg ctr" style="left:1044px;top:604px;width:100px;height:20px;line-height:22px;">отчёт</div>
<div class="c dg ctr" style="left:1145px;top:604px;width:100px;height:20px;line-height:22px;">отчёт</div>
<div class="c dg" style="left:1246px;top:604px;width:22px;height:20px;line-height:22px;"></div>
<div class="c lg ctr" style="left:46px;top:625px;width:48px;height:20px;line-height:22px;">18</div>
<div class="c lg cb" style="left:95px;top:625px;width:150px;height:20px;line-height:22px;">@goalder,</div>
<div class="c lg ctr" style="left:250px;top:625px;width:70px;height:20px;line-height:22px;"></div>
<div class="c lg" style="left:321px;top:625px;width:258px;height:20px;line-height:22px;">каждый день немного</div>
<div class="c lg" style="left:580px;top:625px;width:261px;height:20px;line-height:22px;">устал</div>
<div class="c dg ctr" style="left:842px;top:625px;width:100px;height:20px;line-height:22px;">отчёт</div>
<div class="c dg ctr" style="left:943px;top:625px;width:100px;height:20px;line-height:22px;">отчёт</div>
<div class="c dg ctr" style="left:1044px;top:625px;width:100px;height:20px;line-height:22px;">отчёт</div>
<div class="c dg ctr" style="left:1145px;top:625px;width:100px;height:20px;line-height:22px;">отчёт</div>
<div class="c dg" style="left:1246px;top:625px;width:22px;height:20px;line-height:22px;"></div>
<div class="c lg ctr" style="left:46px;top:646px;width:48px;height:20px;line-height:22px;">19</div>
<div class="c lg cb" style="left:95px;top:646px;width:150px;height:20px;line-height:22px;">@Nadezhda1984,</div>
<div class="c lg ctr" style="left:250px;top:646px;width:70px;height:20px;line-height:22px;"><u>дневник</u></div>
<div class="c lg" style="left:321px;top:646px;width:258px;height:20px;line-height:22px;">В данный момент я закончила свои отнош</div>
<div class="c lg" style="left:580px;top:646px;width:261px;height:20px;line-height:22px;">Бросила курить. Не нравится вкус алкогол</div>
<div class="c dg ctr" style="left:842px;top:646px;width:100px;height:20px;line-height:22px;">отчёт</div>
<div class="c dg ctr" style="left:943px;top:646px;width:100px;height:20px;line-height:22px;">отчёт</div>
<div class="c dg ctr" style="left:1044px;top:646px;width:100px;height:20px;line-height:22px;">отчёт</div>
<div class="c dg ctr" style="left:1145px;top:646px;width:100px;height:20px;line-height:22px;">отчёт</div>
<div class="c dg" style="left:1246px;top:646px;width:22px;height:20px;line-height:22px;"></div>
<div class="c lg ctr" style="left:46px;top:667px;width:48px;height:20px;line-height:22px;">20</div>
<div class="c lg cb" style="left:95px;top:667px;width:150px;height:20px;line-height:22px;">@Berlinka,</div>
<div class="c lg ctr" style="left:250px;top:667px;width:70px;height:20px;line-height:22px;"><u>дневник</u></div>
<div class="c lg" style="left:321px;top:667px;width:258px;height:20px;line-height:22px;">Крепкие напитки не употребляю, но любл</div>
<div class="c lg" style="left:580px;top:667px;width:261px;height:20px;line-height:22px;">Что побудило вас отказаться от алкоголя</div>
<div class="c dg ctr" style="left:842px;top:667px;width:100px;height:20px;line-height:22px;">отчёт</div>
<div class="c dg ctr" style="left:943px;top:667px;width:100px;height:20px;line-height:22px;">отчёт</div>
<div class="c dg ctr" style="left:1044px;top:667px;width:100px;height:20px;line-height:22px;">отчёт</div>
<div class="c dg ctr" style="left:1145px;top:667px;width:100px;height:20px;line-height:22px;">отчёт</div>
<div class="c dg" style="left:1246px;top:667px;width:22px;height:20px;line-height:22px;"></div>
<div class="c lg ctr" style="left:46px;top:688px;width:48px;height:20px;line-height:22px;">21</div>
<div class="c lg cb" style="left:95px;top:688px;width:150px;height:20px;line-height:22px;">@ Угрюмый нелюдим,</div>
<div class="c lg ctr" style="left:250px;top:688px;width:70px;height:20px;line-height:22px;">дневник</div>
<div class="c lg" style="left:321px;top:688px;width:258px;height:20px;line-height:22px;">Никакого отношения к алкоголю не имею</div>
<div class="c lg" style="left:580px;top:688px;width:261px;height:20px;line-height:22px;">Здоровье, деньги</div>
<div class="c dg ctr" style="left:842px;top:688px;width:100px;height:20px;line-height:22px;">отчёт</div>
<div class="c dg ctr" style="left:943px;top:688px;width:100px;height:20px;line-height:22px;">отчёт</div>
<div class="c dg ctr" style="left:1044px;top:688px;width:100px;height:20px;line-height:22px;">отчёт</div>
<div class="c dg ctr" style="left:1145px;top:688px;width:100px;height:20px;line-height:22px;">отчёт</div>
<div class="c dg" style="left:1246px;top:688px;width:22px;height:20px;line-height:22px;"></div>
<div class="c lg ctr" style="left:46px;top:709px;width:48px;height:20px;line-height:22px;">22</div>
<div class="c lg cb" style="left:95px;top:709px;width:150px;height:20px;line-height:22px;">@Iness,</div>
<div class="c lg ctr" style="left:250px;top:709px;width:70px;height:20px;line-height:22px;">нет</div>
<div class="c lg" style="left:321px;top:709px;width:258px;height:20px;line-height:22px;">Не пью совсем и мне так жить понравило</div>
<div class="c lg" style="left:580px;top:709px;width:261px;height:20px;line-height:22px;">Здоровье и отказ от сигарет ( вообще все</div>
<div class="c dg ctr" style="left:842px;top:709px;width:100px;height:20px;line-height:22px;">отчёт</div>
<div class="c dg ctr" style="left:943px;top:709px;width:100px;height:20px;line-height:22px;">отчёт</div>
<div class="c dg ctr" style="left:1044px;top:709px;width:100px;height:20px;line-height:22px;">отчёт</div>
<div class="c dg ctr" style="left:1145px;top:709px;width:100px;height:20px;line-height:22px;">отчёт</div>
<div class="c dg" style="left:1246px;top:709px;width:22px;height:20px;line-height:22px;"></div>
<div class="c lg ctr" style="left:46px;top:730px;width:48px;height:20px;line-height:22px;">23</div>
<div class="c lg cb" style="left:95px;top:730px;width:150px;height:20px;line-height:22px;">@Dina_T,</div>
<div class="c lg ctr" style="left:250px;top:730px;width:70px;height:20px;line-height:22px;">нет</div>
<div class="c lg" style="left:321px;top:730px;width:258px;height:20px;line-height:22px;">Что-то зачастил он в гости ко мне. Кажды</div>
<div class="c lg" style="left:580px;top:730px;width:261px;height:20px;line-height:22px;">&nbsp;Выбираю жить трезво</div>
<div class="c dg ctr" style="left:842px;top:730px;width:100px;height:20px;line-height:22px;">отчёт</div>
<div class="c dg ctr" style="left:943px;top:730px;width:100px;height:20px;line-height:22px;">отчёт</div>
<div class="c dg ctr" style="left:1044px;top:730px;width:100px;height:20px;line-height:22px;">отчёт</div>
<div class="c dg ctr" style="left:1145px;top:730px;width:100px;height:20px;line-height:22px;">отчёт</div>
<div class="c dg" style="left:1246px;top:730px;width:22px;height:20px;line-height:22px;"></div>
<div class="c lg ctr" style="left:46px;top:751px;width:48px;height:20px;line-height:22px;">24</div>
<div class="c lg cb" style="left:95px;top:751px;width:150px;height:20px;line-height:22px;">@Неалка,</div>
<div class="c lg ctr" style="left:250px;top:751px;width:70px;height:20px;line-height:22px;"><u>дневник&nbsp;</u></div>
<div class="c lg" style="left:321px;top:751px;width:258px;height:20px;line-height:22px;">Пью с однокурсницами до потери памят</div>
<div class="c lg" style="left:580px;top:751px;width:261px;height:20px;line-height:22px;">С частотой примерно раз в месяц</div>
<div class="c dg ctr" style="left:842px;top:751px;width:100px;height:20px;line-height:22px;">отчёт</div>
<div class="c dg ctr" style="left:943px;top:751px;width:100px;height:20px;line-height:22px;">отчёт</div>
<div class="c dg ctr" style="left:1044px;top:751px;width:100px;height:20px;line-height:22px;">отчёт</div>
<div class="c dg ctr" style="left:1145px;top:751px;width:100px;height:20px;line-height:22px;">отчёт</div>
<div class="c dg" style="left:1246px;top:751px;width:22px;height:20px;line-height:22px;"></div>
<div class="c lg ctr" style="left:46px;top:772px;width:48px;height:20px;line-height:22px;">25</div>
<div class="c lg cb" style="left:95px;top:772px;width:150px;height:20px;line-height:22px;">@Oksi1,</div>
<div class="c lg ctr" style="left:250px;top:772px;width:70px;height:20px;line-height:22px;">нет</div>
<div class="c lg" style="left:321px;top:772px;width:258px;height:20px;line-height:22px;">спокойно могу не пить</div>
<div class="c lg ctr" style="left:580px;top:772px;width:261px;height:20px;line-height:22px;">ясное сознание</div>
<div class="c dg ctr" style="left:842px;top:772px;width:100px;height:20px;line-height:22px;">отчёт</div>
<div class="c dg ctr" style="left:943px;top:772px;width:100px;height:20px;line-height:22px;">отчёт</div>
<div class="c dg ctr" style="left:1044px;top:772px;width:100px;height:20px;line-height:22px;">отчёт</div>
<div class="c dg ctr" style="left:1145px;top:772px;width:100px;height:20px;line-height:22px;">отчёт</div>
<div class="c dg" style="left:1246px;top:772px;width:22px;height:20px;line-height:22px;"></div>
<div class="c lg ctr" style="left:46px;top:793px;width:48px;height:20px;line-height:22px;">26</div>
<div class="c lg cb" style="left:95px;top:793px;width:150px;height:20px;line-height:22px;">@Игорчик,</div>
<div class="c lg ctr" style="left:250px;top:793px;width:70px;height:20px;line-height:22px;"><u>дневник</u></div>
<div class="c lg" style="left:321px;top:793px;width:258px;height:20px;line-height:22px;">Почувствовал, что трезвый образ жизни</div>
<div class="c lg" style="left:580px;top:793px;width:261px;height:20px;line-height:22px;">это очень здорово!</div>
<div class="c dg ctr" style="left:842px;top:793px;width:100px;height:20px;line-height:22px;">отчёт</div>
<div class="c dg ctr" style="left:943px;top:793px;width:100px;height:20px;line-height:22px;">отчёт</div>
<div class="c dg ctr" style="left:1044px;top:793px;width:100px;height:20px;line-height:22px;">отчёт</div>
<div class="c dg ctr" style="left:1145px;top:793px;width:100px;height:20px;line-height:22px;">отчёт</div>
<div class="c dg" style="left:1246px;top:793px;width:22px;height:20px;line-height:22px;"></div>
<div class="c lg ctr" style="left:46px;top:814px;width:48px;height:20px;line-height:22px;">27</div>
<div class="c lg cb" style="left:95px;top:814px;width:150px;height:20px;line-height:22px;">@OffBuh,</div>
<div class="c lg ctr" style="left:250px;top:814px;width:70px;height:20px;line-height:22px;"><u>дневник</u></div>
<div class="c lg" style="left:321px;top:814px;width:258px;height:20px;line-height:22px;">Не пью больше недели</div>
<div class="c lg" style="left:580px;top:814px;width:261px;height:20px;line-height:22px;">Проблемы везде и повсюду.</div>
<div class="c dg ctr" style="left:842px;top:814px;width:100px;height:20px;line-height:22px;">отчёт</div>
<div class="c dg ctr" style="left:943px;top:814px;width:100px;height:20px;line-height:22px;">отчёт</div>
<div class="c dg ctr" style="left:1044px;top:814px;width:100px;height:20px;line-height:22px;">отчёт</div>
<div class="c dg ctr" style="left:1145px;top:814px;width:100px;height:20px;line-height:22px;">отчёт</div>
<div class="c dg" style="left:1246px;top:814px;width:22px;height:20px;line-height:22px;"></div>
<div class="c wh" style="left:46px;top:835px;width:48px;height:20px;line-height:22px;"></div>
<div class="c wh" style="left:95px;top:835px;width:150px;height:20px;line-height:22px;"></div>
<div class="c wh" style="left:250px;top:835px;width:70px;height:20px;line-height:22px;"></div>
<div class="c wh" style="left:321px;top:835px;width:258px;height:20px;line-height:22px;"></div>
<div class="c wh" style="left:580px;top:835px;width:261px;height:20px;line-height:22px;"></div>
<div class="c wh" style="left:842px;top:835px;width:100px;height:20px;line-height:22px;"></div>
<div class="c wh" style="left:943px;top:835px;width:100px;height:20px;line-height:22px;"></div>
<div class="c wh" style="left:1044px;top:835px;width:100px;height:20px;line-height:22px;"></div>
<div class="c wh" style="left:1145px;top:835px;width:100px;height:20px;line-height:22px;"></div>
<div class="c wh" style="left:1246px;top:835px;width:22px;height:20px;line-height:22px;"></div>
<div class="c wh" style="left:46px;top:856px;width:48px;height:20px;line-height:22px;"></div>
<div class="c wh" style="left:95px;top:856px;width:150px;height:20px;line-height:22px;"></div>
<div class="c wh" style="left:250px;top:856px;width:70px;height:20px;line-height:22px;"></div>
<div class="c wh" style="left:321px;top:856px;width:258px;height:20px;line-height:22px;"></div>
<div class="c wh" style="left:580px;top:856px;width:261px;height:20px;line-height:22px;"></div>
<div class="c wh" style="left:842px;top:856px;width:100px;height:20px;line-height:22px;"></div>
<div class="c wh" style="left:943px;top:856px;width:100px;height:20px;line-height:22px;"></div>
<div class="c wh" style="left:1044px;top:856px;width:100px;height:20px;line-height:22px;"></div>
<div class="c wh" style="left:1145px;top:856px;width:100px;height:20px;line-height:22px;"></div>
<div class="c wh" style="left:1246px;top:856px;width:22px;height:20px;line-height:22px;"></div>
<div class="c wh" style="left:46px;top:877px;width:48px;height:20px;line-height:22px;"></div>
<div class="c wh" style="left:95px;top:877px;width:150px;height:20px;line-height:22px;"></div>
<div class="c gr" style="left:250px;top:877px;width:70px;height:20px;line-height:22px;"></div>
<div class="c gr" style="left:321px;top:877px;width:258px;height:20px;line-height:22px;"></div>
<div class="c gr" style="left:580px;top:877px;width:261px;height:20px;line-height:22px;"></div>
<div class="c wh" style="left:842px;top:877px;width:100px;height:20px;line-height:22px;"></div>
<div class="c wh" style="left:943px;top:877px;width:100px;height:20px;line-height:22px;"></div>
<div class="c wh" style="left:1044px;top:877px;width:100px;height:20px;line-height:22px;"></div>
<div class="c wh" style="left:1145px;top:877px;width:100px;height:20px;line-height:22px;"></div>
<div class="c wh" style="left:1246px;top:877px;width:22px;height:20px;line-height:22px;"></div>
<div class="c wh" style="left:46px;top:898px;width:48px;height:20px;line-height:22px;"></div>
<div class="c wh" style="left:95px;top:898px;width:150px;height:20px;line-height:22px;"></div>
<div class="c wh" style="left:250px;top:898px;width:70px;height:20px;line-height:22px;"></div>
<div class="c wh" style="left:321px;top:898px;width:258px;height:20px;line-height:22px;"></div>
<div class="c wh" style="left:580px;top:898px;width:261px;height:20px;line-height:22px;"></div>
<div class="c dg ctr" style="left:842px;top:898px;width:100px;height:20px;line-height:22px;">отчёт</div>
<div class="c wh" style="left:943px;top:898px;width:100px;height:20px;line-height:22px;"></div>
<div class="c wh" style="left:1044px;top:898px;width:100px;height:20px;line-height:22px;"></div>
<div class="c wh" style="left:1145px;top:898px;width:100px;height:20px;line-height:22px;"></div>
<div class="c wh" style="left:1246px;top:898px;width:22px;height:20px;line-height:22px;"></div>
<div class="c wh" style="left:46px;top:919px;width:48px;height:20px;line-height:22px;"></div>
<div class="c wh" style="left:95px;top:919px;width:150px;height:20px;line-height:22px;"></div>
<div class="c wh" style="left:250px;top:919px;width:70px;height:20px;line-height:22px;"></div>
<div class="c wh" style="left:321px;top:919px;width:258px;height:20px;line-height:22px;"></div>
<div class="c wh" style="left:580px;top:919px;width:261px;height:20px;line-height:22px;"></div>
<div class="c yl ctr" style="left:842px;top:919px;width:100px;height:20px;line-height:22px;">нет отчёта</div>
<div class="c wh" style="left:943px;top:919px;width:100px;height:20px;line-height:22px;"></div>
<div class="c wh" style="left:1044px;top:919px;width:100px;height:20px;line-height:22px;"></div>
<div class="c wh" style="left:1145px;top:919px;width:100px;height:20px;line-height:22px;"></div>
<div class="c wh" style="left:1246px;top:919px;width:22px;height:20px;line-height:22px;"></div>
<div class="c wh" style="left:46px;top:940px;width:48px;height:20px;line-height:22px;"></div>
<div class="c wh" style="left:95px;top:940px;width:150px;height:20px;line-height:22px;"></div>
<div class="c wh" style="left:250px;top:940px;width:70px;height:20px;line-height:22px;"></div>
<div class="c wh" style="left:321px;top:940px;width:258px;height:20px;line-height:22px;"></div>
<div class="c wh" style="left:580px;top:940px;width:261px;height:20px;line-height:22px;"></div>
<div class="c rd" style="left:842px;top:940px;width:100px;height:20px;line-height:22px;"></div>
<div class="c wh" style="left:943px;top:940px;width:100px;height:20px;line-height:22px;"></div>
<div class="c wh" style="left:1044px;top:940px;width:100px;height:20px;line-height:22px;"></div>
<div class="c wh" style="left:1145px;top:940px;width:100px;height:20px;line-height:22px;"></div>
<div class="c wh" style="left:1246px;top:940px;width:22px;height:20px;line-height:22px;"></div>
<div class="abs" style="left:0;top:285px;width:1268px;height:4px;background:#e3e5ea"></div><div class="abs" style="left:0;top:285px;width:46px;height:4px;background:#c6c6c6"></div><div class="abs" style="left:246px;top:182px;width:4px;height:780px;background:#e3e5ea"></div><div class="abs" style="left:246px;top:182px;width:4px;height:23px;background:#bdbdbd"></div>
</div></div>
<svg class="abs" style="left:0;top:0;pointer-events:none" width="1280" height="994" viewBox="0 0 1280 994"><path d="M20.0 661.2 C26.7 661.2 46.7 661.2 60.0 661.2 C73.3 661.2 85.0 661.2 100.0 661.3 C115.0 661.4 136.7 661.8 150.0 662.0 C163.3 662.2 164.2 662.5 180.0 662.8 C195.8 663.1 220.0 663.3 245.0 664.0 C270.0 664.7 300.8 666.2 330.0 667.0 C359.2 667.8 391.7 668.2 420.0 668.7 C448.3 669.2 480.0 669.6 500.0 669.7 C520.0 669.8 516.7 669.9 540.0 669.5 C563.3 669.1 613.3 668.2 640.0 667.5 C666.7 666.8 680.0 665.9 700.0 665.0 C720.0 664.1 740.0 662.8 760.0 662.0 C780.0 661.2 801.7 660.8 820.0 660.5 C838.3 660.2 843.3 659.9 870.0 660.0 C896.7 660.1 945.0 660.8 980.0 661.0 C1015.0 661.2 1060.0 661.4 1080.0 661.0 C1100.0 660.6 1085.0 659.2 1100.0 658.8 C1115.0 658.4 1155.7 658.6 1170.0 658.8 C1184.3 659.0 1181.7 659.2 1186.0 660.0 C1190.3 660.8 1193.7 662.2 1196.0 663.5 C1198.3 664.8 1199.8 665.8 1200.0 668.0 C1200.2 670.2 1198.3 673.8 1197.0 677.0 C1195.7 680.2 1193.8 684.2 1192.0 687.0 C1190.2 689.8 1189.7 692.2 1186.0 693.5 C1182.3 694.8 1179.8 694.6 1170.0 694.8 C1160.2 695.0 1137.5 695.1 1127.0 694.7 C1116.5 694.3 1118.2 692.8 1107.0 692.3 C1095.8 691.8 1077.8 691.8 1060.0 691.5 C1042.2 691.2 1023.3 691.1 1000.0 690.5 C976.7 689.9 943.3 688.3 920.0 688.0 C896.7 687.7 880.0 688.6 860.0 688.7 C840.0 688.8 820.0 688.3 800.0 688.7 C780.0 689.1 760.0 689.8 740.0 691.0 C720.0 692.2 703.3 694.1 680.0 696.0 C656.7 697.9 623.3 700.7 600.0 702.5 C576.7 704.3 556.7 706.3 540.0 707.0 C523.3 707.7 520.0 706.9 500.0 706.8 C480.0 706.7 448.3 707.1 420.0 706.6 C391.7 706.1 359.2 705.0 330.0 704.0 C300.8 703.0 266.7 701.6 245.0 700.6 C223.3 699.6 215.8 699.0 200.0 698.0 C184.2 697.0 167.5 695.2 150.0 694.3 C132.5 693.4 107.5 693.0 95.0 692.5 C82.5 692.0 80.8 691.8 75.0 691.0 C69.2 690.2 64.2 689.6 60.0 687.8 C55.8 686.0 52.5 682.8 50.0 680.0 C47.5 677.2 46.3 673.5 45.0 671.0 C43.7 668.5 43.2 667.3 42.0 665.0 C40.8 662.7 38.7 658.3 38.0 657.0" fill="none" stroke="#e8120f" stroke-width="3.600" stroke-linecap="round" stroke-linejoin="round"/><path d="M150.0 662.0 C155.0 662.1 164.2 662.5 180.0 662.8 C195.8 663.1 220.0 663.3 245.0 664.0 C270.0 664.7 300.8 666.2 330.0 667.0 C359.2 667.8 405.0 668.4 420.0 668.7" fill="none" stroke="#e8120f" stroke-width="5" stroke-linecap="round" stroke-linejoin="round"/><path d="M870.0 660.0 C888.3 660.2 945.0 660.8 980.0 661.0 C1015.0 661.2 1060.0 661.4 1080.0 661.0 C1100.0 660.6 1085.0 659.2 1100.0 658.8 C1115.0 658.4 1155.7 658.6 1170.0 658.8 C1184.3 659.0 1181.7 659.2 1186.0 660.0 C1190.3 660.8 1193.7 662.2 1196.0 663.5 C1198.3 664.8 1199.8 665.8 1200.0 668.0 C1200.2 670.2 1198.3 673.8 1197.0 677.0 C1195.7 680.2 1193.8 684.2 1192.0 687.0 C1190.2 689.8 1189.7 692.2 1186.0 693.5 C1182.3 694.8 1179.8 694.6 1170.0 694.8 C1160.2 695.0 1137.5 695.1 1127.0 694.7 C1116.5 694.3 1118.2 692.8 1107.0 692.3 C1095.8 691.8 1077.8 691.8 1060.0 691.5 C1042.2 691.2 1023.3 691.1 1000.0 690.5 C976.7 689.9 943.3 688.3 920.0 688.0 C896.7 687.7 870.0 688.6 860.0 688.7" fill="none" stroke="#e8120f" stroke-width="5" stroke-linecap="round" stroke-linejoin="round"/><path d="M540.0 707.0 C533.3 707.0 520.0 706.9 500.0 706.8 C480.0 706.7 448.3 707.1 420.0 706.6 C391.7 706.1 359.2 705.0 330.0 704.0 C300.8 703.0 266.7 701.6 245.0 700.6 C223.3 699.6 215.8 699.0 200.0 698.0 C184.2 697.0 167.5 695.2 150.0 694.3 C132.5 693.4 107.5 693.0 95.0 692.5 C82.5 692.0 80.8 691.8 75.0 691.0 C69.2 690.2 64.2 689.6 60.0 687.8 C55.8 686.0 52.5 682.8 50.0 680.0 C47.5 677.2 46.3 673.5 45.0 671.0 C43.7 668.5 43.2 667.3 42.0 665.0 C40.8 662.7 38.7 658.3 38.0 657.0" fill="none" stroke="#e8120f" stroke-width="5" stroke-linecap="round" stroke-linejoin="round"/><path d="M38.0 656.0 C38.3 654.7 38.5 650.1 40.0 648.0 C41.5 645.9 37.0 644.7 47.0 643.5 C57.0 642.3 67.0 641.3 100.0 641.0 C133.0 640.7 206.7 641.4 245.0 641.8 C283.3 642.2 300.8 642.7 330.0 643.5 C359.2 644.3 385.0 645.7 420.0 646.8 C455.0 647.9 500.0 650.1 540.0 650.0 C580.0 649.9 620.0 646.4 660.0 646.0 C700.0 645.6 748.3 646.7 780.0 647.5 C811.7 648.3 830.0 649.8 850.0 651.0 C870.0 652.2 879.2 653.5 900.0 655.0 C920.8 656.5 962.5 659.2 975.0 660.0" fill="none" stroke="#e23a2c" stroke-width="1" stroke-linecap="round"/><path d="M45.0 650.0 C44.8 652.5 43.8 659.0 44.0 665.0 C44.2 671.0 43.7 681.6 46.0 686.0 C48.3 690.4 49.0 690.5 58.0 691.5 C67.0 692.5 84.7 692.0 100.0 692.0 C115.3 692.0 133.3 691.8 150.0 691.5 C166.7 691.2 191.7 690.7 200.0 690.5" fill="none" stroke="#e23a2c" stroke-width="1" stroke-linecap="round"/><path d="M575.0 691.0 C577.5 690.0 584.2 686.2 590.0 685.0 C595.8 683.8 591.7 683.8 610.0 683.5 C628.3 683.2 668.3 682.9 700.0 683.0 C731.7 683.1 776.7 683.7 800.0 684.0 C823.3 684.3 828.3 684.3 840.0 685.0 C851.7 685.7 865.0 687.5 870.0 688.0" fill="none" stroke="#e23a2c" stroke-width="1" stroke-linecap="round"/><path d="M640.0 666.0 C650.0 665.6 681.3 664.3 700.0 663.5 C718.7 662.7 743.3 661.4 752.0 661.0" fill="none" stroke="#e23a2c" stroke-width="1" stroke-linecap="round"/><path d="M980.0 690.5 C983.3 690.9 993.0 692.2 1000.0 693.0 C1007.0 693.8 1018.3 695.1 1022.0 695.5" fill="none" stroke="#e23a2c" stroke-width="1" stroke-linecap="round"/><path d="M1145.0 687.0 C1150.8 686.8 1170.8 686.2 1180.0 685.8 C1189.2 685.4 1195.0 685.1 1200.0 684.8 C1205.0 684.5 1208.7 684.8 1210.0 683.8 C1211.3 682.8 1208.8 680.5 1208.0 679.0 C1207.2 677.5 1205.5 675.7 1205.0 675.0" fill="none" stroke="#e23a2c" stroke-width="1" stroke-linecap="round"/></svg>
<!-- ================= scrollbars / bottom ================= -->
<div class="abs" style="left:1268px;top:182px;width:12px;height:761px;background:#fbfbfb;border-left:1px solid #e6e6e6"></div><div class="abs" style="left:1268px;top:182px;width:12px;height:107px;background:#fff;border-left:1px solid #e2e2e2"></div><div class="abs" style="left:1268px;top:285px;width:12px;height:4px;background:#e6e8ec"></div><div class="abs" style="left:1270px;top:290px;width:9px;height:26px;background:#c6c6c6"></div><div class="abs" style="left:1268px;top:911px;width:12px;height:16px;background:#f8f8f8;border:1px solid #e2e2e2"></div><div class="abs" style="left:1268px;top:927px;width:12px;height:16px;background:#f8f8f8;border:1px solid #e2e2e2"></div><svg class="abs" style="left:1271px;top:917px" width="7" height="4" viewBox="0 0 7 4"><path d="M0 4h7L3.500 0z" fill="#9a9a9a"/></svg><svg class="abs" style="left:1271px;top:933px" width="7" height="4" viewBox="0 0 7 4"><path d="M0 0h7L3.500 4z" fill="#9a9a9a"/></svg>
<div id="hscroll"><div class="abs" style="left:246px;top:0;width:4px;height:12px;background:#dfe2e8"></div>
<div class="abs" style="left:318px;top:2px;width:358px;height:9px;background:#d2d2d2"></div><div class="abs" style="left:1236px;top:0;width:16px;height:12px;border-left:1px solid #e0e0e0;border-right:1px solid #e0e0e0"></div><div class="abs" style="left:1267px;top:0;width:1px;height:12px;background:#e0e0e0"></div><svg class="abs" style="left:1242px;top:3px" width="4" height="7" viewBox="0 0 4 7"><path d="M4 0v7L0 3.500z" fill="#8a8a8a"/></svg><svg class="abs" style="left:1258px;top:3px" width="4" height="7" viewBox="0 0 4 7"><path d="M0 0v7L4 3.500z" fill="#8a8a8a"/></svg>
</div>
<div id="bottom">
<svg class="abs" style="left:50px;top:10px" width="12.500" height="13" viewBox="0 0 13 13"><path d="M0 1.500h13M0 4.800h13M0 8.100h13M0 11.400h13" stroke="#555" stroke-width="1.700"/></svg><div class="abs" style="left:86px;top:0px;width:100px;height:26px;background:#fff;border:1px solid #d0d0d0;border-top:none;border-bottom:3px solid #113a5c"></div><span class="abs" style="left:93px;top:6px;font-size:12.5px;color:#111;white-space:nowrap">отметки #13</span><svg class="abs" style="left:172px;top:12px" width="7" height="4" viewBox="0 0 7 4"><path d="M0 0h7L3.500 4z" fill="#aaa"/></svg><div class="abs" style="left:188px;top:0px;width:99px;height:26px;background:#e4e4e4;border:1px solid #d0d0d0;border-top:none;border-bottom:3px solid #d8201f"></div><span class="abs" style="left:195px;top:6px;font-size:12.5px;color:#777;white-space:nowrap">юбилеи #13</span><svg class="abs" style="left:273px;top:12px" width="7" height="4" viewBox="0 0 7 4"><path d="M0 0h7L3.500 4z" fill="#aaa"/></svg><div class="abs" style="left:1129px;top:0;width:151px;height:39px;background:#f9f9f9;border-left:1px solid #d9d9d9"></div><svg class="abs" style="left:1142px;top:10px" width="19" height="21" viewBox="0 0 19 21"><path d="M2 0h15a2 2 0 0 1 2 2v13a2 2 0 0 1-2 2h-5.500L9.500 20.500 7.500 17H2a2 2 0 0 1-2-2V2a2 2 0 0 1 2-2z" fill="#1a9c58"/><path d="M9.500 3.300Q10.300 7.700 14.700 8.500Q10.300 9.300 9.500 13.700Q8.700 9.300 4.300 8.500Q8.700 7.700 9.500 3.300z" fill="#fff"/></svg><span class="abs" style="left:1173px;top:12px;font-size:12.2px;color:#3a9d6a;white-space:nowrap">Анализ данных</span>
</div>
</body>
</html>
